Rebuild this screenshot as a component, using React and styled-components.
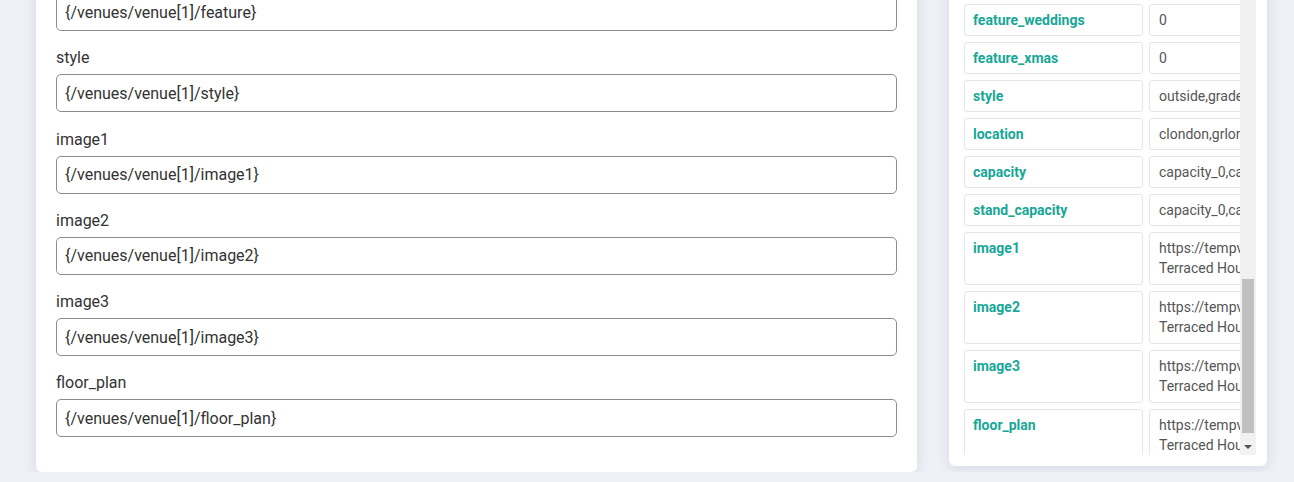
import React from 'react';
import styled, { createGlobalStyle } from 'styled-components';

const GlobalStyle = createGlobalStyle`
  html, body {
    margin: 0;
    padding: 0;
    background: #eef1f6;
    font-family: Roboto, "Liberation Sans", Arial, sans-serif;
    overflow: hidden;
  }
`;

const fields = [
  { name: 'feature', hideLabel: true },
  { name: 'style' },
  { name: 'image1' },
  { name: 'image2' },
  { name: 'image3' },
  { name: 'floor_plan' },
];

const rows = [
  { key: 'feature_weddings', value: ['0'] },
  { key: 'feature_xmas', value: ['0'] },
  { key: 'style', value: ['outside,grade_ii_listed,terrace'] },
  { key: 'location', value: ['clondon,grlondon,islington'] },
  { key: 'capacity', value: ['capacity_0,capacity_50,capacity_100'] },
  { key: 'stand_capacity', value: ['capacity_0,capacity_50,capacity_100'] },
  { key: 'image1', value: ['https://tempvenues.co.uk/img/1.jpg', 'Terraced House Garden'] },
  { key: 'image2', value: ['https://tempvenues.co.uk/img/2.jpg', 'Terraced House Lounge'] },
  { key: 'image3', value: ['https://tempvenues.co.uk/img/3.jpg', 'Terraced House Kitchen'] },
  { key: 'floor_plan', value: ['https://tempvenues.co.uk/img/fp.jpg', 'Terraced House Plan'] },
];

const App = () => {
  return (
    <>
      <GlobalStyle />
      <Page>
        <FormCard>
          {fields.map((f) => (
            <Field key={f.name}>
              {!f.hideLabel && <Label>{f.name}</Label>}
              <Input readOnly value={`{/venues/venue[1]/${f.name}}`} />
            </Field>
          ))}
        </FormCard>
        <PreviewCard>
          <ScrollView>
            <Table>
              {rows.map((r) => (
                <React.Fragment key={r.key}>
                  <KeyCell tall={r.value.length > 1}>{r.key}</KeyCell>
                  <ValueCell tall={r.value.length > 1}>
                    {r.value.map((line) => (
                      <Line key={line}>{line}</Line>
                    ))}
                  </ValueCell>
                </React.Fragment>
              ))}
            </Table>
          </ScrollView>
          <ScrollTrack>
            <Thumb />
            <ArrowButton>
              <Arrow />
            </ArrowButton>
          </ScrollTrack>
        </PreviewCard>
      </Page>
    </>
  );
};

const Page = styled.div`
  display: flex;
  align-items: flex-start;
  gap: 32px;
  padding: 0 27px 0 36px;
  margin-top: -20px;
`;

const FormCard = styled.div`
  flex: 1;
  background: #fff;
  border-radius: 6px;
  box-shadow: 0 2px 14px rgba(60, 75, 100, 0.14);
  padding: 13px 20px 35px;
`;

const Field = styled.div`
  display: flex;
  flex-direction: column;
`;

const Label = styled.div`
  font-size: 16px;
  line-height: 24px;
  color: #333;
  margin: 15.25px 0 4px;
`;

const Input = styled.input`
  box-sizing: border-box;
  height: 38px;
  width: 100%;
  border: 1px solid #8c8c8c;
  border-radius: 5px;
  padding: 0 8px;
  font-family: Roboto, "Liberation Sans", Arial, sans-serif;
  font-size: 16px;
  color: #333;
  background: #fff;
  outline: none;
`;

const PreviewCard = styled.div`
  width: 318px;
  box-sizing: border-box;
  background: #fff;
  border-radius: 6px;
  box-shadow: 0 2px 14px rgba(60, 75, 100, 0.14);
  padding: 0 11px 11px 15px;
  display: flex;
`;

const ScrollView = styled.div`
  flex: 1;
  height: 475px;
  overflow: hidden;
`;

const Table = styled.div`
  display: grid;
  grid-template-columns: 179px 320px;
  gap: 6px;
  padding-top: 24px;
`;

const Cell = styled.div`
  box-sizing: border-box;
  border: 1px solid #e3e6ea;
  border-radius: 3px;
  padding: 5px 8px ${(p) => (p.tall ? '6px' : '5px')};
  font-size: 14px;
  line-height: 20px;
  white-space: nowrap;
  overflow: hidden;
`;

const KeyCell = styled(Cell)`
  color: #17a797;
  font-weight: 700;
`;

const ValueCell = styled(Cell)`
  color: #555;
  padding-left: 9px;
`;

const Line = styled.div``;

const ScrollTrack = styled.div`
  width: 16px;
  height: 475px;
  background: #f1f1f1;
  display: flex;
  flex-direction: column;
  justify-content: flex-end;
  align-items: center;
`;

const Thumb = styled.div`
  width: 12px;
  height: 154px;
  background: #c1c1c1;
  margin-bottom: 6px;
`;

const ArrowButton = styled.div`
  width: 16px;
  height: 16px;
  display: flex;
  align-items: center;
  justify-content: center;
`;

const Arrow = styled.div`
  width: 0;
  height: 0;
  border-left: 4px solid transparent;
  border-right: 4px solid transparent;
  border-top: 4px solid #505050;
`;

export default App;
